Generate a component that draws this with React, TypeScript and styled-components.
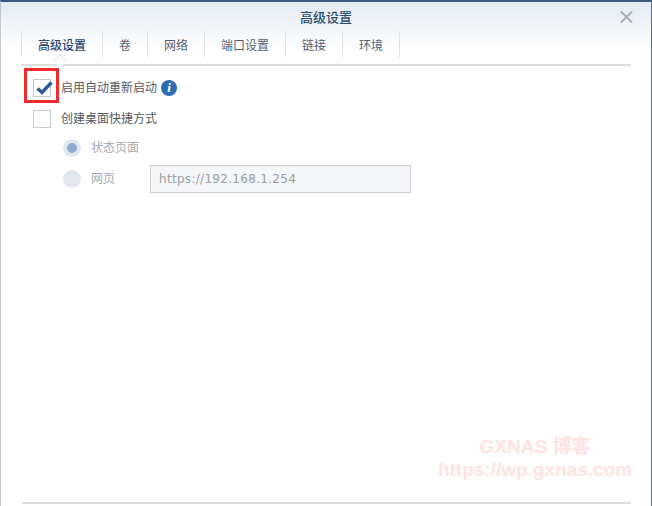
import styled, { createGlobalStyle } from 'styled-components';

const tabs = ['高级设置', '卷', '网络', '端口设置', '链接', '环境'];

const GlobalStyle = createGlobalStyle`
  html, body {
    margin: 0;
    padding: 0;
    background: #fff;
  }
  body {
    font-family: "Noto Sans CJK SC", "Liberation Sans", sans-serif;
  }
`;

const Dialog = styled.div`
  position: relative;
  box-sizing: border-box;
  width: 652px;
  height: 506px;
  overflow: hidden;
  display: flex;
  flex-direction: column;
  border-top: 2px solid #3a5a80;
  border-left: 1px solid #c4c8cc;
  border-right: 1px solid #5f7480;
  background: linear-gradient(#e4ebf3 0, #fff 50px);
`;

const TitleBar = styled.div`
  height: 29px;
  flex: none;
  display: flex;
  align-items: center;
  justify-content: center;
  box-sizing: border-box;
  font-size: 13px;
  font-weight: 500;
  color: #2c4a6e;
`;

const CloseButton = styled.svg`
  position: absolute;
  top: 9px;
  right: 18px;
  width: 13px;
  height: 12px;
`;

const TabBar = styled.div`
  flex: none;
  margin: 0 20px;
  height: 33px;
  display: flex;
  align-items: flex-start;
  border-bottom: 2px solid #dcdee0;
`;

const Tab = styled.div<{ $active?: boolean }>`
  position: relative;
  box-sizing: border-box;
  height: 26px;
  padding: 0 16px;
  display: flex;
  align-items: center;
  font-size: 12px;
  font-weight: ${(p) => (p.$active ? 500 : 400)};
  color: ${(p) => (p.$active ? '#2c4a6e' : '#55616e')};
  border-right: 1px solid #dfe2e5;
  border-left: ${(p) => (p.$active ? '1px solid #dfe2e5' : 'none')};

  ${(p) =>
    p.$active &&
    `
    &::after {
      content: '';
      position: absolute;
      left: 33px;
      bottom: -9px;
      width: 9px;
      height: 9px;
      background: #fff;
      border-left: 1px solid #dcdee0;
      border-top: 1px solid #dcdee0;
      transform: rotate(45deg);
    }
  `}
`;

const Content = styled.div`
  flex: 1;
  padding: 8px 0 0 32px;
  display: flex;
  flex-direction: column;
`;

const Row = styled.div<{ $indent?: boolean; $gap?: number }>`
  height: 27px;
  display: flex;
  align-items: center;
  margin-top: ${(p) => p.$gap ?? 0}px;
  margin-left: ${(p) => (p.$indent ? '30px' : '0')};
`;

const Box = styled.div`
  box-sizing: border-box;
  width: 18px;
  height: 18px;
  border: 1px solid #c6cbd1;
  background: #fff;
  margin-right: 10px;
  position: relative;
`;

const Check = styled.svg`
  position: absolute;
  left: 1px;
  top: -1px;
  width: 18px;
  height: 18px;
`;

const Label = styled.span`
  font-size: 12px;
  color: #4f5964;
  margin-bottom: 2px;
`;

const DisabledLabel = styled(Label)`
  color: #a3a9b2;
  margin-right: 20px;
`;

const InfoIcon = styled.div`
  width: 16px;
  height: 16px;
  border-radius: 50%;
  background: #2d6cb5;
  color: #fff;
  margin-left: 4px;
  display: flex;
  align-items: center;
  justify-content: center;
  font-family: "Liberation Serif", serif;
  font-style: italic;
  font-weight: 700;
  font-size: 13px;
`;

const Radio = styled.div<{ $checked?: boolean }>`
  box-sizing: border-box;
  width: 18px;
  height: 18px;
  border-radius: 50%;
  background: #e2e7ef;
  margin-right: 10px;
  display: flex;
  align-items: center;
  justify-content: center;

  &::after {
    content: '';
    display: ${(p) => (p.$checked ? 'block' : 'none')};
    width: 10px;
    height: 10px;
    border-radius: 50%;
    background: #8fa9cf;
  }
`;

const UrlInput = styled.div`
  box-sizing: border-box;
  flex: none;
  align-self: flex-start;
  width: 261px;
  height: 28px;
  margin-left: 15px;
  padding-left: 8px;
  display: flex;
  align-items: center;
  background: #f5f6f8;
  border: 1px solid #ccd0d5;
  font-family: "DejaVu Sans", sans-serif;
  font-size: 12px;
  letter-spacing: 0.3px;
  color: #9a9fa7;
`;

const Footer = styled.div`
  flex: none;
  margin: 0 20px 2px 21px;
  height: 2px;
  background: #dcdee0;
`;

const Highlight = styled.div`
  position: absolute;
  left: 23px;
  top: 66px;
  width: 35px;
  height: 35px;
  box-sizing: border-box;
  border: 3px solid #ef2b2d;
`;

const Watermark = styled.div`
  position: absolute;
  right: 16px;
  top: 433px;
  width: 200px;
  text-align: center;
  font-family: "Liberation Sans", "Noto Sans CJK SC", sans-serif;
  font-weight: 700;
  font-size: 19px;
  line-height: 23px;
  color: #ffe3e3;
  white-space: nowrap;
`;

export default function App() {
  return (
    <>
      <GlobalStyle />
      <Dialog>
        <TitleBar>高级设置</TitleBar>
        <CloseButton viewBox="0 0 13 12">
          <path d="M1 0.5 L12 11.5 M12 0.5 L1 11.5" stroke="#a9aeb4" strokeWidth="2" fill="none" />
        </CloseButton>

        <TabBar>
          {tabs.map((tab, idx) => (
            <Tab key={tab} $active={idx === 0}>
              {tab}
            </Tab>
          ))}
        </TabBar>

        <Content>
          <Row>
            <Box>
              <Check viewBox="0 0 18 18">
                <path d="M2.5 9.5 L7 13.5 L16.5 3.5" stroke="#2c5a94" strokeWidth="3.4" fill="none" />
              </Check>
            </Box>
            <Label>启用自动重新启动</Label>
            <InfoIcon>i</InfoIcon>
          </Row>
          <Row $gap={4}>
            <Box />
            <Label>创建桌面快捷方式</Label>
          </Row>
          <Row $indent $gap={2}>
            <Radio $checked />
            <DisabledLabel>状态页面</DisabledLabel>
          </Row>
          <Row $indent $gap={4}>
            <Radio />
            <DisabledLabel>网页</DisabledLabel>
            <UrlInput>https://192.168.1.254</UrlInput>
          </Row>
        </Content>

        <Footer />
        <Highlight />
        <Watermark>
          GXNAS 博客
          <br />
          https://wp.gxnas.com
        </Watermark>
      </Dialog>
    </>
  );
}
